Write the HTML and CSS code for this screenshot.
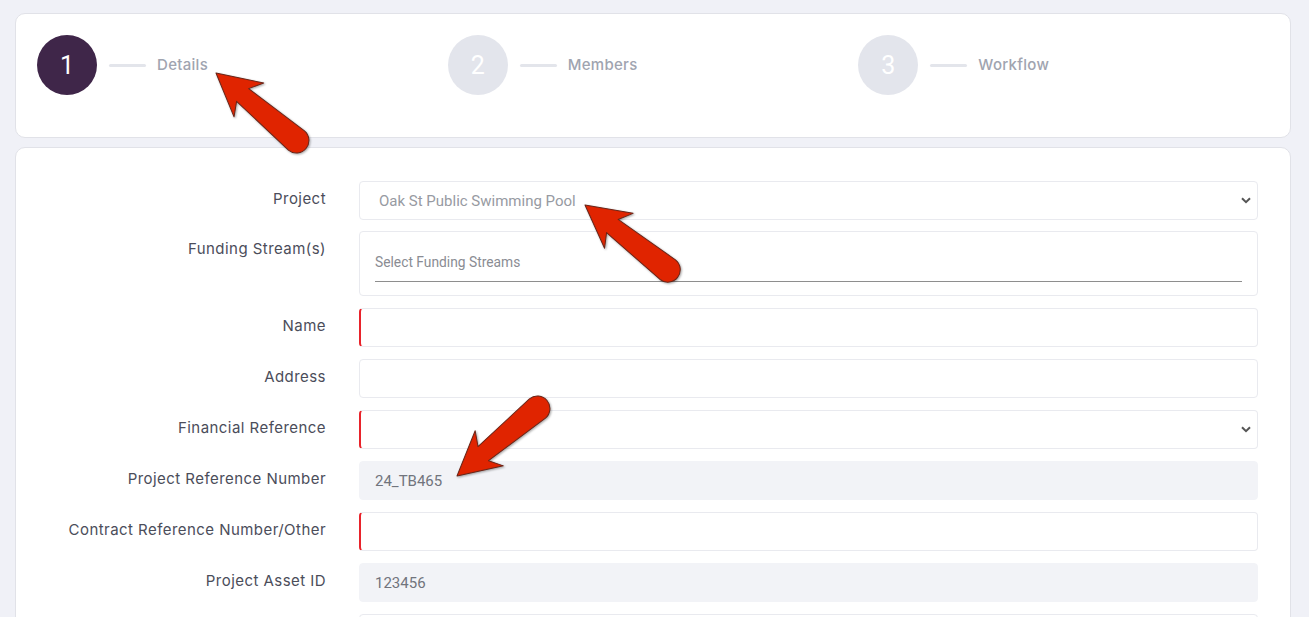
FILE: index.html
```html
<!DOCTYPE html>
<html lang="en">
<head>
<meta charset="utf-8">
<title>Project wizard</title>
<link rel="stylesheet" href="styles.css">
</head>
<body>
<div class="page">
  <section class="card stepper">
    <div class="step active">
      <div class="step-circle">1</div>
      <div class="step-line"></div>
      <div class="step-label">Details</div>
    </div>
    <div class="step">
      <div class="step-circle">2</div>
      <div class="step-line"></div>
      <div class="step-label">Members</div>
    </div>
    <div class="step">
      <div class="step-circle">3</div>
      <div class="step-line"></div>
      <div class="step-label">Workflow</div>
    </div>
  </section>

  <section class="card form">
    <div class="row">
      <label class="label">Project</label>
      <div class="field select">
        <span class="value select-value">Oak St Public Swimming Pool</span>
        <svg class="chev" width="10" height="7" viewBox="0 0 10 7"><path d="M1 1.2 L5 5.2 L9 1.2" fill="none" stroke="#555" stroke-width="2"/></svg>
      </div>
    </div>
    <div class="row">
      <label class="label">Funding Stream(s)</label>
      <div class="field multi">
        <div class="multi-input">Select Funding Streams</div>
      </div>
    </div>
    <div class="row">
      <label class="label">Name</label>
      <div class="field required"></div>
    </div>
    <div class="row">
      <label class="label">Address</label>
      <div class="field"></div>
    </div>
    <div class="row">
      <label class="label">Financial Reference</label>
      <div class="field select required">
        <span class="value"></span>
        <svg class="chev" width="10" height="7" viewBox="0 0 10 7"><path d="M1 1.2 L5 5.2 L9 1.2" fill="none" stroke="#555" stroke-width="2"/></svg>
      </div>
    </div>
    <div class="row">
      <label class="label">Project Reference Number</label>
      <div class="field readonly"><span class="value">24_TB465</span></div>
    </div>
    <div class="row">
      <label class="label">Contract Reference Number/Other</label>
      <div class="field required"></div>
    </div>
    <div class="row">
      <label class="label">Project Asset ID</label>
      <div class="field readonly"><span class="value">123456</span></div>
    </div>
    <div class="row">
      <label class="label">&nbsp;</label>
      <div class="field"></div>
    </div>
  </section>
</div>

<svg class="annotations" width="1309" height="617" viewBox="0 0 1309 617">
  <defs>
    <path id="arrow" d="M0,0 L43,-23 L35,-9 L105,-12.5 A12.5,12.5 0 0 1 105,12.5 L34,8.5 L42,22 Z"/>
  </defs>
  <g class="arrow"><use href="#arrow" transform="translate(216,73) rotate(40)"/></g>
  <g class="arrow"><use href="#arrow" transform="translate(585,205) rotate(38)"/></g>
  <g class="arrow"><use href="#arrow" transform="translate(457,476) rotate(-40)"/></g>
</svg>
</body>
</html>
```

FILE: styles.css
```css
* { box-sizing: border-box; }

html, body {
  margin: 0;
  padding: 0;
  background: #f0f1f7;
  font-family: "Inter", "Noto Sans", sans-serif;
  color: #4b4d5a;
}

.page {
  padding: 13px 18px 0 15px;
  display: flex;
  flex-direction: column;
  gap: 9px;
  width: 1309px;
  height: 617px;
  overflow: hidden;
}

.card {
  background: #ffffff;
  border: 1px solid #e1e2e8;
  border-radius: 10px;
}

/* Stepper */
.stepper {
  display: grid;
  grid-template-columns: repeat(3, 1fr);
  padding: 21px 21px 42px 21px;
  height: 125px;
}

.step {
  display: flex;
  align-items: center;
}

.step-circle {
  width: 60px;
  height: 60px;
  border-radius: 50%;
  background: #e3e5ec;
  color: #ffffff;
  display: flex;
  align-items: center;
  justify-content: center;
  font-family: "Roboto", "Liberation Sans", sans-serif;
  font-size: 25px;
  font-weight: 400;
}

.step.active .step-circle {
  background: #3f2649;
}

.step-line {
  width: 37px;
  height: 3px;
  border-radius: 2px;
  background: #e3e5eb;
  margin: 0 11px 0 12px;
}

.step-label {
  font-family: "Inter", "Noto Sans", sans-serif;
  font-size: 15px;
  font-weight: 500;
  letter-spacing: 0.3px;
  color: #a0a4b0;
  padding-bottom: 1px;
}

/* Form */
.form {
  flex: 1;
  border-bottom-left-radius: 0;
  border-bottom-right-radius: 0;
  padding: 33px 32px 0 32px;
  display: flex;
  flex-direction: column;
  gap: 12px;
}

.form .row:first-child {
  margin-bottom: -1px;
}

.row {
  display: grid;
  grid-template-columns: 278px 1fr;
  column-gap: 33px;
  align-items: start;
}

.label {
  text-align: right;
  font-size: 15px;
  letter-spacing: 0.45px;
  line-height: 22px;
  padding-top: 7px;
  color: #4b4d5a;
  white-space: nowrap;
}

.field {
  height: 39px;
  border: 1px solid #e9eaef;
  border-radius: 4px;
  background: #ffffff;
  display: flex;
  align-items: center;
  padding: 0 15px;
  font-family: "Roboto", "Liberation Sans", sans-serif;
  font-size: 15px;
  color: #71747d;
}

.field.required {
  border-left: 2px solid #e8232b;
}

.field.readonly {
  background: #f2f3f7;
  border-color: #f2f3f7;
}

.field.select {
  justify-content: space-between;
  padding: 0 5px 0 19px;
}

.select-value {
  color: #979aa2;
}

.chev {
  display: block;
  margin-right: 1px;
}

.field.multi {
  height: 65px;
  align-items: flex-end;
  padding: 0 15px 13px 15px;
}

.multi-input {
  width: 100%;
  border-bottom: 1px solid #8e8e8e;
  font-size: 13.8px;
  color: #8a8c93;
  padding-bottom: 11px;
}

/* Annotation arrows (overlay) */
.annotations {
  position: absolute;
  top: 0;
  left: 0;
  pointer-events: none;
}

.arrow use {
  fill: #e02400;
  stroke: #6b2416;
  stroke-width: 1;
  stroke-linejoin: round;
}

.arrow {
  filter: drop-shadow(1px 1px 1px rgba(0, 0, 0, 0.35));
}
```
